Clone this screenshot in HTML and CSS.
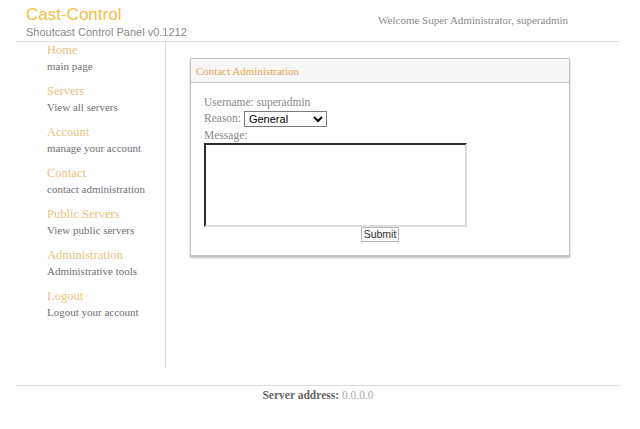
FILE: index.html
```html
<!DOCTYPE html>
<html lang="en">
<head>
  <meta charset="UTF-8">
  <title>Cast-Control - Contact</title>
  <link rel="stylesheet" href="styles.css">
</head>
<body>
  <div class="wrap">
    <div class="header">
      <div class="brand">
        <div class="logo">Cast-Control</div>
        <div class="version">Shoutcast Control Panel v0.1212</div>
      </div>
      <div class="welcome">Welcome Super Administrator, superadmin</div>
    </div>

    <div class="main">
      <div class="sidebar">
        <div class="nav-item"><a href="#">Home</a><span>main page</span></div>
        <div class="nav-item"><a href="#">Servers</a><span>View all servers</span></div>
        <div class="nav-item"><a href="#">Account</a><span>manage your account</span></div>
        <div class="nav-item"><a href="#">Contact</a><span>contact administration</span></div>
        <div class="nav-item"><a href="#">Public Servers</a><span>View public servers</span></div>
        <div class="nav-item"><a href="#">Administration</a><span>Administrative tools</span></div>
        <div class="nav-item"><a href="#">Logout</a><span>Logout your account</span></div>
      </div>

      <div class="content">
        <div class="panel">
          <div class="panel-title">Contact Administration</div>
          <form class="panel-body">
            <div class="row">Username: superadmin</div>
            <div class="row">Reason:
              <select class="reason">
                <option>General</option>
                <option>Server</option>
                <option>Account</option>
              </select>
            </div>
            <div class="row">Message:</div>
            <textarea class="message"></textarea>
            <div class="submit-row"><button type="button" class="submit">Submit</button></div>
          </form>
        </div>
      </div>
    </div>

    <div class="footer"><b>Server address:</b> 0.0.0.0</div>
  </div>
</body>
</html>
```

FILE: styles.css
```css
body {
  margin: 0;
  background-color: #fff;
  font-family: "Liberation Serif", "Times New Roman", serif;
  color: #777;
}

.wrap {
  margin: 0 20px 0 16px;
}

.header {
  display: flex;
  justify-content: space-between;
  height: 41px;
  border-bottom: 1px solid #e2e2e2;
}

.brand {
  padding: 4px 0 0 10px;
  font-family: "Liberation Sans", Arial, sans-serif;
}

.logo {
  font-size: 17px;
  line-height: 21px;
  color: #f0c040;
}

.version {
  font-size: 11px;
  line-height: 14px;
  color: #8a8a8a;
}

.welcome {
  padding: 14px 52px 0 0;
  font-size: 11px;
  color: #8c8c8c;
}

.main {
  display: flex;
}

.sidebar {
  width: 150px;
  min-height: 326px;
  border-right: 1px solid #ddd;
  padding-left: 31px;
  box-sizing: border-box;
}

.nav-item {
  margin-bottom: 9px;
}

.nav-item a {
  display: block;
  font-size: 12.5px;
  line-height: 16px;
  color: #e9c27e;
  text-decoration: none;
}

.nav-item span {
  display: block;
  font-size: 11px;
  line-height: 16px;
  color: #707070;
}

.content {
  padding: 16px 0 0 24px;
}

.panel {
  width: 378px;
  border: 1px solid #c4c4c4;
  box-shadow: 0 2px 2px #bbb;
}

.panel-title {
  height: 23px;
  line-height: 24px;
  padding-left: 5px;
  background-color: #f6f6f6;
  border-bottom: 1px solid #c4c4c4;
  font-size: 11px;
  color: #e6a85a;
}

.panel-body {
  margin: 0;
  padding: 11px 13px 13px 13px;
}

.row {
  font-size: 11.5px;
  line-height: 16px;
  color: #8a8a8a;
}

.reason {
  width: 83px;
  height: 16px;
  padding: 0;
  font-family: "Liberation Sans", Arial, sans-serif;
  font-size: 11px;
  color: #000;
  border: 1px solid #7a7a7a;
  background-color: #fff;
  vertical-align: middle;
}

.message {
  display: block;
  width: 263px;
  height: 84px;
  box-sizing: border-box;
  margin: 0;
  border: 2px inset #ddd;
  border-top-color: #808080;
  border-left-color: #808080;
  resize: none;
}

.submit-row {
  text-align: center;
  margin-top: 0;
  line-height: 15px;
}

.submit {
  height: 15px;
  padding: 0 2px;
  font-family: "Liberation Sans", Arial, sans-serif;
  font-size: 10.5px;
  line-height: 13px;
  color: #333;
  background-color: #fafafa;
  border: 1px solid #bbb;
  vertical-align: top;
}

.footer {
  margin-top: 17px;
  border-top: 1px solid #ddd;
  padding-top: 1px;
  text-align: center;
  font-size: 11.5px;
  line-height: 16px;
  color: #aaa;
}

.footer b {
  color: #666;
}
```
